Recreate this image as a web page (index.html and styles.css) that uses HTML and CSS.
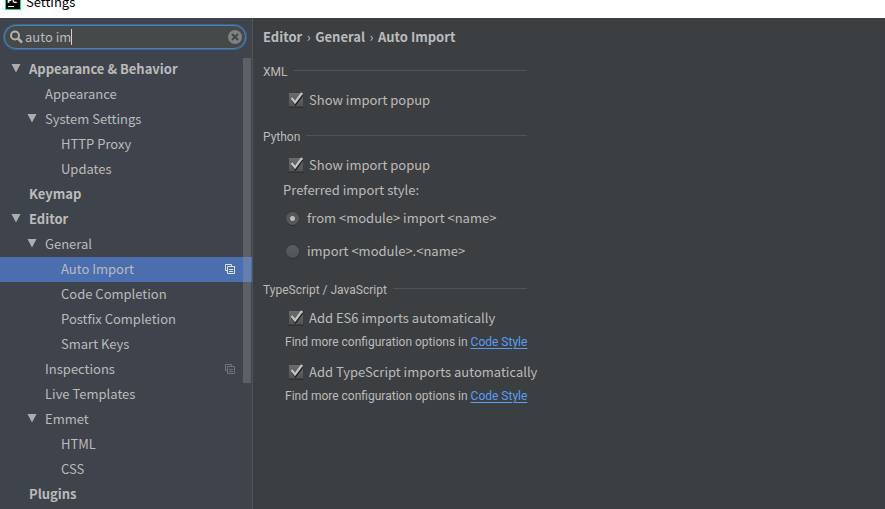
FILE: index.html
```html
<!DOCTYPE html>
<html lang="en">
<head>
<meta charset="utf-8">
<title>Settings</title>
<link rel="stylesheet" href="styles.css">
</head>
<body>
<svg class="defs" aria-hidden="true">
  <symbol id="copy" viewBox="0 0 10 10"><path d="M2 6.500H.5V.5H6.500V2M2.500 2.500H9.500V9.500H2.500ZM4 5.500H8M4 7.500H8" fill="none" stroke="currentColor"/></symbol>
  <symbol id="arrow" viewBox="0 0 10 9"><path d="M.5 0H9.500L5 8.500Z" fill="currentColor"/></symbol>
  <symbol id="tick" viewBox="0 0 16 16"><path d="M4 7.500L7.500 12.500L14.500 3" fill="none" stroke="#202224" stroke-width="2"/><path d="M3.500 6L7 10.500L14 1" fill="none" stroke="#c4c4c4" stroke-width="2.200"/></symbol>
</svg>
<header class="titlebar">
  <svg class="logo" width="16" height="16" viewBox="0 0 16 16"><rect width="16" height="16" fill="#21d789"/><rect x="1" y="1" width="14" height="14" fill="#000"/><text x="2" y="9" class="logo-text">PC</text><path d="M3 12.500H9" stroke="#fff"/></svg>
  <span>Settings</span>
</header>
<div class="window">
  <aside class="sidebar">
    <div class="search">
      <svg width="13" height="14" viewBox="0 0 13 14" fill="none" stroke="#afb1b3"><circle cx="5" cy="5.500" r="4" stroke-width="2"/><path d="M8 8.500L12 12.500" stroke-width="2.500"/></svg>
      <input class="search-input" type="text" value="auto im" aria-label="Search settings">
      <span class="caret"></span>
      <button class="clear" aria-label="Clear search"><svg width="14" height="14" viewBox="0 0 14 14"><circle cx="7" cy="7" r="7" fill="#7f8283"/><path d="M4 4L10 10M10 4L4 10" stroke="#434748" stroke-width="2"/></svg></button>
    </div>
    <nav class="tree" aria-label="Settings pages">
      <ul>
        <li><div class="row top"><button class="toggle" aria-label="Toggle Appearance &amp; Behavior"><svg><use href="#arrow"/></svg></button><span>Appearance &amp; Behavior</span></div>
          <ul>
            <li><div class="row level2 leaf">Appearance</div></li>
            <li><div class="row level2"><button class="toggle" aria-label="Toggle System Settings"><svg><use href="#arrow"/></svg></button><span>System Settings</span></div>
              <ul>
                <li><div class="row level3 leaf">HTTP Proxy</div></li>
                <li><div class="row level3 leaf">Updates</div></li>
              </ul></li>
          </ul></li>
        <li><div class="row top leaf">Keymap</div></li>
        <li><div class="row top"><button class="toggle" aria-label="Toggle Editor"><svg><use href="#arrow"/></svg></button><span>Editor</span></div>
          <ul>
            <li><div class="row level2"><button class="toggle" aria-label="Toggle General"><svg><use href="#arrow"/></svg></button><span>General</span></div>
              <ul>
                <li><div class="row level3 leaf selected"><span>Auto Import</span><svg class="copy"><use href="#copy"/></svg></div></li>
                <li><div class="row level3 leaf">Code Completion</div></li>
                <li><div class="row level3 leaf">Postfix Completion</div></li>
                <li><div class="row level3 leaf">Smart Keys</div></li>
              </ul></li>
            <li><div class="row level2 leaf"><span>Inspections</span><svg class="copy"><use href="#copy"/></svg></div></li>
            <li><div class="row level2 leaf">Live Templates</div></li>
            <li><div class="row level2"><button class="toggle" aria-label="Toggle Emmet"><svg><use href="#arrow"/></svg></button><span>Emmet</span></div>
              <ul>
                <li><div class="row level3 leaf">HTML</div></li>
                <li><div class="row level3 leaf">CSS</div></li>
              </ul></li>
          </ul></li>
        <li><div class="row top leaf">Plugins</div></li>
      </ul>
      <div class="scrollbar"></div>
    </nav>
  </aside>
  <main class="content">
    <h1 class="breadcrumb"><span>Editor</span><span class="sep">›</span><span>General</span><span class="sep">›</span><span>Auto Import</span></h1>
    <div class="form">
      <section>
        <h2>XML</h2>
        <label class="option"><span class="box"><input type="checkbox" checked><svg><use href="#tick"/></svg></span>Show import popup</label>
      </section>
      <section>
        <h2>Python</h2>
        <label class="option"><span class="box"><input type="checkbox" checked><svg><use href="#tick"/></svg></span>Show import popup</label>
        <fieldset>
          <legend>Preferred import style:</legend>
          <label class="choice"><input type="radio" name="style" checked>from &lt;module&gt; import &lt;name&gt;</label>
          <label class="choice"><input type="radio" name="style">import &lt;module&gt;.&lt;name&gt;</label>
        </fieldset>
      </section>
      <section>
        <h2>TypeScript / JavaScript</h2>
        <label class="option"><span class="box"><input type="checkbox" checked><svg><use href="#tick"/></svg></span>Add ES6 imports automatically</label>
        <p>Find more configuration options in <a href="#code-style">Code Style</a></p>
        <label class="option"><span class="box"><input type="checkbox" checked><svg><use href="#tick"/></svg></span>Add TypeScript imports automatically</label>
        <p>Find more configuration options in <a href="#code-style">Code Style</a></p>
      </section>
    </div>
  </main>
</div>
</body>
</html>
```
FILE: styles.css
```css
* { box-sizing: border-box; }
body {
  margin: 0;
  height: 100vh;
  overflow: hidden;
  display: flex;
  flex-direction: column;
  background: #3c3f41;
  color: #bbbbbb;
  font: 13px/20px "Noto Sans CJK SC", "Noto Sans", sans-serif;
}
.defs { position: absolute; width: 0; height: 0; }
svg { display: block; flex: none; }
button { border: 0; padding: 0; background: none; color: inherit; }
ul { list-style: none; margin: 0; padding: 0; }

.titlebar {
  flex: none;
  display: flex;
  align-items: center;
  gap: 5px;
  height: 32px;
  margin-top: -14px;
  padding-left: 5px;
  background: #fff;
  color: #000;
}
.logo-text { font: bold 8px "Open Sans", sans-serif; fill: #fff; }

.window { flex: 1; display: flex; min-height: 0; }
.sidebar {
  flex: none;
  width: 253px;
  display: flex;
  flex-direction: column;
  background: #3f434c;
  border-right: 1px solid #515457;
}
.search {
  flex: none;
  display: flex;
  align-items: center;
  height: 24px;
  margin: 7px 6px 8px 4px;
  padding: 0 3px 0 5px;
  background: #45494a;
  border: 1px solid #4b7fb5;
  border-radius: 12px;
  box-shadow: 0 0 0 1px #40648c;
}
.search-input {
  field-sizing: content;
  margin-left: 2px;
  padding: 0;
  border: 0;
  outline: 0;
  background: none;
  color: #bbbbbb;
  font: inherit;
}
.caret { width: 1px; height: 16px; background: #d0d0d0; }
.clear { margin-left: auto; }

.tree { position: relative; flex: 1; min-height: 0; overflow: hidden; }
.row { display: flex; align-items: center; height: 25px; padding: 0 17px 2px 0; }
.row.top { padding-left: 11px; font-weight: bold; }
.level2 { padding-left: 27px; }
.level3 { padding-left: 43px; }
.leaf::before { content: ""; width: 18px; }
.toggle { width: 18px; color: #adadad; }
.toggle svg { width: 10px; height: 9px; }
.copy { width: 10px; height: 10px; margin-left: auto; color: #6f737a; }
.selected { background: #4b6eaf; }
.selected .copy { color: #dfe1e5; }
.scrollbar {
  position: absolute;
  top: 1px;
  right: 1px;
  width: 8px;
  height: 72%;
  background: rgba(166, 166, 166, 0.3);
}

.content { flex: 1; min-width: 0; padding: 9px 10px; }
.breadcrumb { display: flex; margin: 0; font-size: 13px; line-height: 20px; }
.sep { width: 13px; text-align: center; font-weight: normal; }
.form { width: max-content; }
section { padding-top: 16px; }
section + section { padding-top: 18px; }
h2 {
  display: flex;
  align-items: center;
  gap: 6px;
  margin: 0 10px 9px 0;
  font: 12px/18px Roboto, sans-serif;
}
h2::after { content: ""; flex: 1; height: 1px; margin-bottom: 3px; background: #515457; }
.option { display: flex; align-items: center; gap: 5px; padding-left: 25px; }
.box { display: grid; }
.box input, .box svg { grid-area: 1 / 1; width: 16px; height: 16px; }
.box svg { pointer-events: none; }
.box input {
  appearance: none;
  margin: 0;
  background: linear-gradient(#6b6b6b, #515354) 1px 1px / 14px 13px no-repeat;
  border-bottom: 1px solid #303234;
}
fieldset { margin: 0; padding: 0 0 2px 20px; border: 0; }
legend { padding: 5px 0 8px; }
.choice { display: flex; align-items: center; gap: 8px; padding-left: 3px; margin-bottom: 13px; }
.choice:last-child { margin-bottom: 0; }
.choice input {
  appearance: none;
  width: 13px;
  height: 13px;
  margin: 0;
  border-radius: 50%;
  background: linear-gradient(#5b5f61, #505355);
  box-shadow: 0 1px 0 #2c2e30, 0 0 0 1px #393c3e;
}
.choice input:checked { background: radial-gradient(circle, #bbbbbb 2px, #55585a 3px); }
p { margin: 5px 0 11px 22px; font: 12px/18px Roboto, sans-serif; }
a { color: #589df6; text-underline-offset: 2px; }
```
